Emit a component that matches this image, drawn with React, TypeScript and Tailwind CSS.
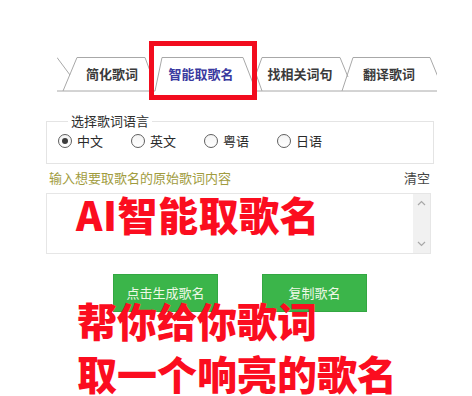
import React from 'react';

const cjk = '"Noto Sans CJK SC", "Noto Sans", sans-serif';

const tabs = [
  { label: '简化歌词', w: 'w-[90px]', active: false },
  { label: '智能取歌名', w: 'w-[88px]', active: true },
  { label: '找相关词句', w: 'w-[90px] ml-[10px]', active: false },
  { label: '翻译歌词', w: 'w-[88px]', active: false },
];

const languages = ['中文', '英文', '粤语', '日语'];

function TabOutline() {
  // outline of the slanted tab strip, drawn once behind the labels
  return (
    <svg className="absolute inset-0" width="380" height="35" viewBox="0 0 380 35" fill="none">
      <g stroke="#a8a8a8" strokeWidth="1">
        <path d="M0 0.5 L13 18" />
        <path d="M6 34 L20 0.5 H88 L96 22" />
        <path d="M98 34 L105 0.5 H186 L199 34" />
        <path d="M205 0.5 L199 17 L205 34" />
        <path d="M205 0.5 H283 L291 20" />
        <path d="M285 34 L296 0.5 H373 L381 20" />
        <path d="M0 34 H98" />
        <path d="M199 34 H380" />
      </g>
    </svg>
  );
}

function Radio({ checked }: { checked: boolean }) {
  return (
    <span className="flex size-[14px] items-center justify-center rounded-full border border-[#5f5f5f] bg-gradient-to-b from-[#f4f4f4] to-white">
      {checked ? <span className="size-[6px] rounded-full bg-[#3c3c3c]" /> : null}
    </span>
  );
}

export default function App() {
  return (
    <div
      className="relative h-[396px] w-[472px] overflow-hidden bg-white text-[13px] text-[#333]"
      style={{ fontFamily: cjk }}
    >
      <div className="relative ml-[57px] mt-[57px] h-[35px] w-[380px]">
        <TabOutline />
        <div className="relative flex h-[34px] items-center pl-[10px]">
          {tabs.map((tab) => (
            <div
              key={tab.label}
              className={`${tab.w} text-center font-semibold leading-[16px] ${
                tab.active ? 'text-[#3a3aa0]' : 'text-[#3a3a3a]'
              }`}
            >
              {tab.label}
            </div>
          ))}
        </div>
      </div>

      <fieldset className="ml-[46px] mt-[21px] w-[388px] border border-[#e4e4e4] pb-[14px] pl-[11px]">
        <legend className="ml-[10px] px-[3px] leading-[16px] text-[#2e2e2e]">选择歌词语言</legend>
        <div className="mt-[4px] flex h-[16px] items-center">
          {languages.map((lang, i) => (
            <label key={lang} className="flex w-[73px] items-center gap-[5px] leading-[16px] text-[#2a2a2a]">
              <Radio checked={i === 0} />
              {lang}
            </label>
          ))}
        </div>
      </fieldset>

      <div className="ml-[49px] mt-[6px] flex w-[381px] items-center justify-between leading-[16px]">
        <span className="text-[#a19c3e]">输入想要取歌名的原始歌词内容</span>
        <span className="text-[#444]">清空</span>
      </div>

      <div className="ml-[46px] mt-[7px] flex h-[61px] w-[385px] border border-[#e6e6e6] bg-white">
        <div className="flex-1" />
        <div className="flex w-[17px] flex-col items-center justify-between bg-[#f1f1f1] py-[6px]">
          <svg width="9" height="6" viewBox="0 0 9 6" fill="none">
            <path d="M1 5 L4.5 1.5 L8 5" stroke="#a8a8a8" strokeWidth="1.2" />
          </svg>
          <svg width="9" height="6" viewBox="0 0 9 6" fill="none">
            <path d="M1 1 L4.5 4.5 L8 1" stroke="#a8a8a8" strokeWidth="1.2" />
          </svg>
        </div>
      </div>

      <div className="ml-[113px] mt-[20px] flex gap-[44px]">
        <button className="h-[38px] w-[105px] border border-[#33a742] bg-[#3bb54a] text-[13px] text-[#eef8e6]">
          点击生成歌名
        </button>
        <button className="h-[38px] w-[105px] border border-[#33a742] bg-[#3bb54a] text-[13px] text-[#eef8e6]">
          复制歌名
        </button>
      </div>

      {/* annotation overlay */}
      <div className="absolute left-[149px] top-[41px] h-[59px] w-[108px] border-[5px] border-[#f20c1e]" />
      <div className="absolute left-[76px] top-[194px] text-[40px] font-black leading-[40px] tracking-[0.5px] text-[#fb0d1f]">
        AI智能取歌名
      </div>
      <div className="absolute left-[77px] top-[294px] w-[340px] text-[40px] font-black leading-[53px] text-[#fb0d1f]">
        <div>帮你给你歌词</div>
        <div>取一个响亮的歌名</div>
      </div>
    </div>
  );
}
